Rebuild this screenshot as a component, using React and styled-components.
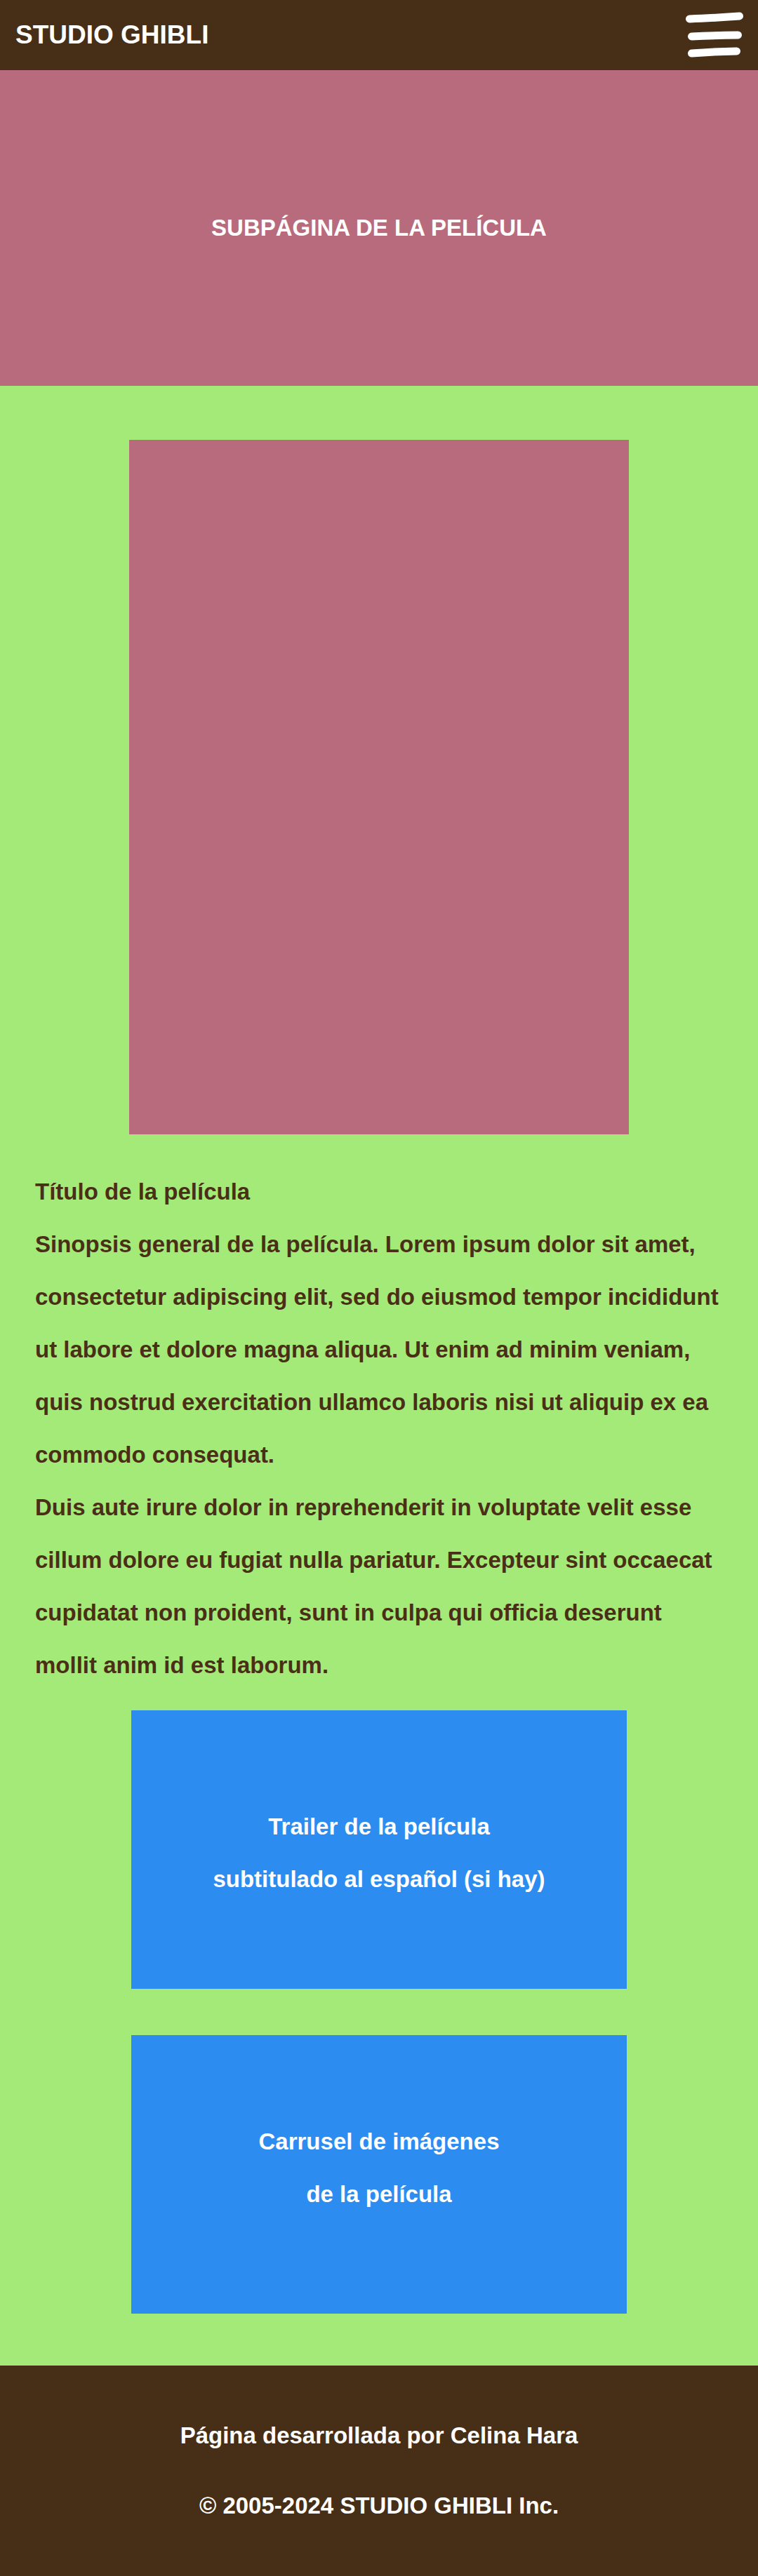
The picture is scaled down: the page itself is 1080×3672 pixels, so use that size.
import React from "react";
import styled, { createGlobalStyle } from "styled-components";

const GlobalStyle = createGlobalStyle`
  * {
    box-sizing: border-box;
  }
  body {
    margin: 0;
    font-family: "Liberation Sans", Arial, Helvetica, sans-serif;
    font-weight: 700;
    background: #a3ea79;
  }
`;

const MenuIcon = () => (
  <svg width="92" height="70" viewBox="0 0 92 70" fill="none">
    <g stroke="#fff" strokeWidth="11" strokeLinecap="round">
      <path d="M10.5 12 Q 40 11 81.5 8" />
      <path d="M13.5 37 Q 45 35.5 79.5 35" />
      <path d="M13.5 61 Q 45 58.5 77.5 58" />
    </g>
  </svg>
);

const App = () => {
  return (
    <Page>
      <GlobalStyle />
      <Header>
        <Brand>STUDIO GHIBLI</Brand>
        <MenuButton aria-label="menú">
          <MenuIcon />
        </MenuButton>
      </Header>

      <Hero>
        <HeroTitle>SUBPÁGINA DE LA PELÍCULA</HeroTitle>
      </Hero>

      <Main>
        <Poster />
        <Synopsis>
          <p>Título de la película</p>
          <p>
            Sinopsis general de la película. Lorem ipsum dolor sit amet,
            consectetur adipiscing elit, sed do eiusmod tempor incididunt ut
            labore et dolore magna aliqua. Ut enim ad minim veniam, quis nostrud
            exercitation ullamco laboris nisi ut aliquip ex ea commodo consequat.
          </p>
          <p>
            Duis aute irure dolor in reprehenderit in voluptate velit esse
            cillum dolore eu fugiat nulla pariatur. Excepteur sint occaecat
            cupidatat non proident, sunt in culpa qui officia deserunt mollit
            anim id est laborum.
          </p>
        </Synopsis>

        <MediaBox $top={27} $shift={4}>
          <span>Trailer de la película</span>
          <span>subtitulado al español (si hay)</span>
        </MediaBox>
        <MediaBox $top={66} $shift={-10}>
          <span>Carrusel de imágenes</span>
          <span>de la película</span>
        </MediaBox>
      </Main>

      <Footer>
        <FooterLine>Página desarrollada por Celina Hara</FooterLine>
        <FooterLine>© 2005-2024 STUDIO GHIBLI Inc.</FooterLine>
      </Footer>
    </Page>
  );
};

const Page = styled.div`
  width: 100%;
  display: flex;
  flex-direction: column;
`;

const Header = styled.header`
  height: 100px;
  background: #472f17;
  display: flex;
  align-items: center;
  justify-content: space-between;
  padding: 0 16px 0 22px;
`;

const Brand = styled.h1`
  margin: 0;
  color: #fff;
  font-size: 37px;
  font-weight: 700;
`;

const MenuButton = styled.button`
  border: none;
  background: none;
  padding: 0;
  display: flex;
  cursor: pointer;
`;

const Hero = styled.section`
  height: 450px;
  background: #b86b7c;
  display: flex;
  align-items: center;
  justify-content: center;
`;

const HeroTitle = styled.h2`
  margin: 0;
  color: #fff;
  font-size: 33px;
  font-weight: 700;
`;

const Main = styled.main`
  background: #a3ea79;
  padding: 77px 0 74px;
  display: flex;
  flex-direction: column;
`;

const Poster = styled.div`
  width: 712px;
  height: 990px;
  margin: 0 auto;
  background: #b86b7c;
`;

const Synopsis = styled.article`
  margin-top: 44px;
  padding: 0 50px;
  color: #4a2f16;
  font-size: 33px;
  line-height: 75px;
  p {
    margin: 0;
  }
`;

const MediaBox = styled.div`
  width: 706px;
  height: 397px;
  margin: ${(p) => p.$top}px auto 0;
  padding: ${(p) => (p.$shift > 0 ? `${p.$shift * 2}px 0 0` : `0 0 ${-p.$shift * 2}px`)};
  background: #2d8cf0;
  color: #fff;
  font-size: 33px;
  line-height: 75px;
  display: flex;
  flex-direction: column;
  align-items: center;
  justify-content: center;
  text-align: center;
`;

const Footer = styled.footer`
  height: 300px;
  background: #472f17;
  padding: 50px 0;
  display: flex;
  flex-direction: column;
  align-items: center;
`;

const FooterLine = styled.p`
  margin: 0;
  color: #fff;
  font-size: 33px;
  line-height: 100px;
`;

export default App;
